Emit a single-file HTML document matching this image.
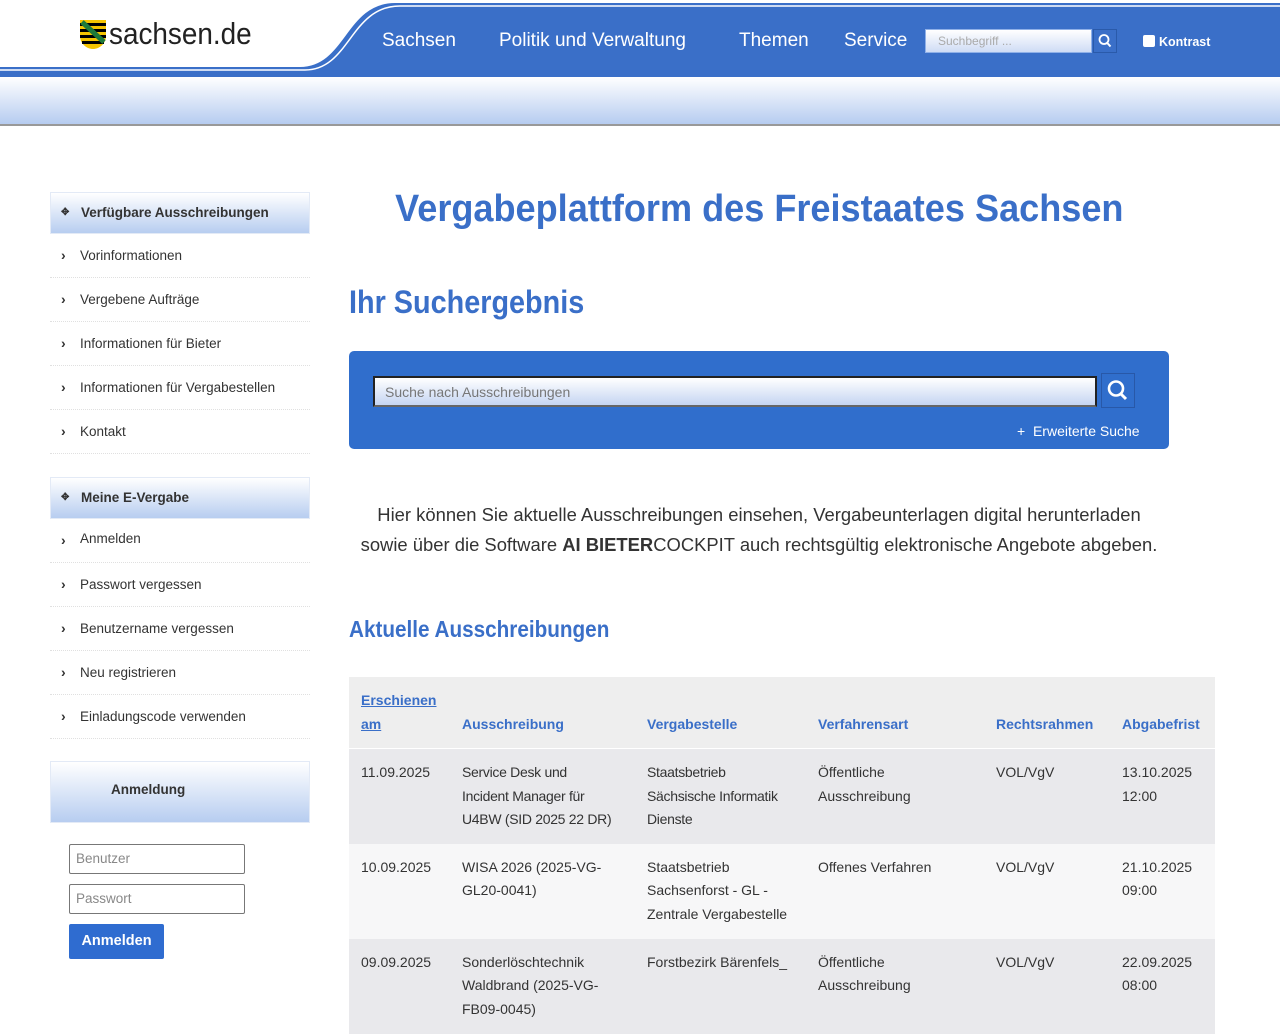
<!DOCTYPE html>
<html><head><meta charset="utf-8"><style>
*{box-sizing:border-box}
body{margin:0;width:1280px;height:1024px;overflow:hidden;background:#fff;font-family:"Liberation Sans",sans-serif;color:#333;position:relative}
.abs{position:absolute}
.nav a{position:absolute;top:30px;color:#fff;font-size:19px;text-decoration:none;transform-origin:left}
.side{position:absolute;left:50px;width:260px}
.shead{height:42px;background:linear-gradient(#fff,#b7cdf0);border:1px solid #e3eaf6;font-size:13.5px;font-weight:bold;color:#333;padding:12px 0 0 30px;position:relative}
.shead:before{content:"✥";position:absolute;left:10px;top:14px;font-size:10px}
.sitem{height:44px;border-bottom:1px dotted #e0e0e0;font-size:13.5px;padding:14px 0 0 30px;position:relative;color:#333}
.sitem:before{content:"›";position:absolute;left:11px;top:13px;font-size:14px;font-weight:bold}
table{border-collapse:collapse;font-size:14px}
td,th{vertical-align:top;text-align:left;padding:0 12px;line-height:23.5px}
td{padding-top:12px}
th{color:#3a6fc8;font-weight:bold;vertical-align:bottom;padding-bottom:12px;padding-top:12px}
</style></head><body>
<svg class="abs" style="left:0;top:0" width="1280" height="128">
<defs><linearGradient id="g" x1="0" y1="0" x2="0" y2="1"><stop offset="0" stop-color="#fff"/><stop offset="1" stop-color="#b6ccf0"/></linearGradient></defs>
<rect x="0" y="0" width="1280" height="128" fill="#fff"/>
<path d="M0 66 L300 66 C345 66 345 2 395 2 L1280 2 L1280 77 L0 77 Z" fill="#3a6fc8"/>
<path d="M0 66 L300 66 C345 66 345 2 395 2 L1280 2" fill="none" stroke="#fff" stroke-width="2"/>
<path d="M0 70 L305 70 C350 70 350 6 400 6 L1280 6" fill="none" stroke="#fff" stroke-width="1.5"/>
<rect x="0" y="77" width="1280" height="47" fill="url(#g)"/>
<rect x="0" y="124" width="1280" height="2" fill="#999"/>
</svg>
<svg class="abs" style="left:80px;top:20px" width="26" height="29"><path d="M0 0H26V16C26 24 19 29 13 29C7 29 0 24 0 16Z" fill="#f5c400"/><g fill="#000"><rect y="3" width="26" height="3"/><rect y="9" width="26" height="3"/><rect y="15" width="26" height="3"/><rect x="2" y="21" width="22" height="3"/></g><path d="M2 2L24 22" stroke="#1e7a3a" stroke-width="5"/></svg>
<div class="abs" style="left:109px;top:16px;font-size:31px;color:#222;transform:scaleX(.9);transform-origin:left">sachsen.de</div>
<div class="nav"><a style="left:382px">Sachsen</a><a style="left:499px">Politik und Verwaltung</a><a style="left:739px">Themen</a><a style="left:844px">Service</a></div>
<div class="abs" style="left:925px;top:29px;width:167px;height:24px;background:linear-gradient(#fff,#cfdcf5);border:1px solid #8fb0e8;font-size:12px;color:#aaa;padding:4px 0 0 12px">Suchbegriff ...</div>
<svg class="abs" style="left:1093px;top:29px" width="24" height="24"><rect x=".5" y=".5" width="23" height="23" fill="none" stroke="#2a5aaa"/><circle cx="11" cy="10.5" r="4.5" fill="none" stroke="#fff" stroke-width="1.8"/><path d="M14.3 14L17.5 17.5" stroke="#fff" stroke-width="2"/></svg>
<div class="abs" style="left:1143px;top:35px;width:12px;height:12px;background:#fff;border-radius:2px"></div>
<div class="abs" style="left:1159px;top:35px;color:#fff;font-size:12.5px;font-weight:bold">Kontrast</div>
<div class="side" style="top:192px">
<div class="shead">Verfügbare Ausschreibungen</div>
<div class="sitem">Vorinformationen</div>
<div class="sitem">Vergebene Aufträge</div>
<div class="sitem">Informationen für Bieter</div>
<div class="sitem">Informationen für Vergabestellen</div>
<div class="sitem">Kontakt</div>
</div>
<div class="side" style="top:477px">
<div class="shead">Meine E-Vergabe</div>
<div class="sitem" style="padding-top:12px">Anmelden</div>
<div class="sitem">Passwort vergessen</div>
<div class="sitem">Benutzername vergessen</div>
<div class="sitem">Neu registrieren</div>
<div class="sitem">Einladungscode verwenden</div>
</div>
<div class="abs" style="left:50px;top:761px;width:260px;height:62px;background:linear-gradient(#fff,#b7cdf0);border:1px solid #e3eaf6;font-size:13.5px;font-weight:bold;padding:20px 0 0 60px">Anmeldung</div>
<div class="abs" style="left:69px;top:844px;width:176px;height:30px;border:1px solid #777;border-radius:2px;font-size:13.5px;color:#888;padding:6px 0 0 6px">Benutzer</div>
<div class="abs" style="left:69px;top:884px;width:176px;height:30px;border:1px solid #777;border-radius:2px;font-size:13.5px;color:#888;padding:6px 0 0 6px">Passwort</div>
<div class="abs" style="left:69px;top:924px;width:95px;height:35px;background:#2f6cd0;border-radius:2px;color:#fff;font-weight:bold;font-size:14.5px;text-align:center;line-height:35px">Anmelden</div>
<div class="abs" style="left:299px;top:188px;width:920px;text-align:center;font-size:38px;font-weight:bold;color:#3a6fc8"><span style="display:inline-block;transform:scaleX(.95)">Vergabeplattform des Freistaates Sachsen</span></div>
<div class="abs" style="left:349px;top:284px;font-size:32px;font-weight:bold;color:#3a6fc8;transform:scaleX(.9);transform-origin:left">Ihr Suchergebnis</div>
<div class="abs" style="left:349px;top:351px;width:820px;height:98px;background:#306ecc;border-radius:5px"></div>
<div class="abs" style="left:373px;top:376px;width:724px;height:31px;border:2px solid #222;border-bottom-color:#666;background:linear-gradient(#fff,#c5d5f2);font-size:14px;color:#777;padding:6px 0 0 10px">Suche nach Ausschreibungen</div>
<svg class="abs" style="left:1101px;top:373px" width="34" height="35"><rect x=".5" y=".5" width="33" height="34" fill="none" stroke="#2858a8"/><circle cx="15" cy="15.5" r="7" fill="none" stroke="#fff" stroke-width="2.6"/><path d="M20 21L25 26" stroke="#fff" stroke-width="3"/></svg>
<div class="abs" style="left:1017px;top:423px;color:#fff;font-size:14px">+&nbsp; Erweiterte Suche</div>
<div class="abs" style="left:349px;top:500px;width:820px;text-align:center;font-size:18.5px;line-height:30px;color:#333"><div style="transform:scaleX(.995);white-space:nowrap">Hier können Sie aktuelle Ausschreibungen einsehen, Vergabeunterlagen digital herunterladen<br>sowie über die Software <b>AI BIETER</b>COCKPIT auch rechtsgültig elektronische Angebote abgeben.</div></div>
<div class="abs" style="left:349px;top:616px;font-size:23px;font-weight:bold;color:#3a6fc8;transform:scaleX(.9);transform-origin:left">Aktuelle Ausschreibungen</div>
<table class="abs" style="left:349px;top:677px;width:866px">
<tr style="background:#eeeeee;height:71px"><th style="width:101px"><u>Erschienen<br>am</u></th><th style="width:185px">Ausschreibung</th><th style="width:171px">Vergabestelle</th><th style="width:178px">Verfahrensart</th><th style="width:126px">Rechtsrahmen</th><th>Abgabefrist</th></tr>
<tr style="background:#e9e9ec;height:95px;border-top:1px solid #fff"><td>11.09.2025</td><td style="letter-spacing:-.3px">Service Desk und<br>Incident Manager für U4BW (SID&nbsp;2025&nbsp;22&nbsp;DR)</td><td style="letter-spacing:-.3px">Staatsbetrieb Sächsische Informatik Dienste</td><td>Öffentliche Ausschreibung</td><td>VOL/VgV</td><td>13.10.2025 12:00</td></tr>
<tr style="background:#f7f7f8;height:95px"><td>10.09.2025</td><td>WISA 2026 (2025-VG-GL20-0041)</td><td>Staatsbetrieb Sachsenforst - GL - Zentrale Vergabestelle</td><td>Offenes Verfahren</td><td>VOL/VgV</td><td>21.10.2025 09:00</td></tr>
<tr style="background:#e9e9ec;height:95px"><td>09.09.2025</td><td>Sonderlöschtechnik Waldbrand (2025-VG-FB09-0045)</td><td>Forstbezirk Bärenfels_</td><td>Öffentliche Ausschreibung</td><td>VOL/VgV</td><td>22.09.2025 08:00</td></tr>
</table>
</body></html>
